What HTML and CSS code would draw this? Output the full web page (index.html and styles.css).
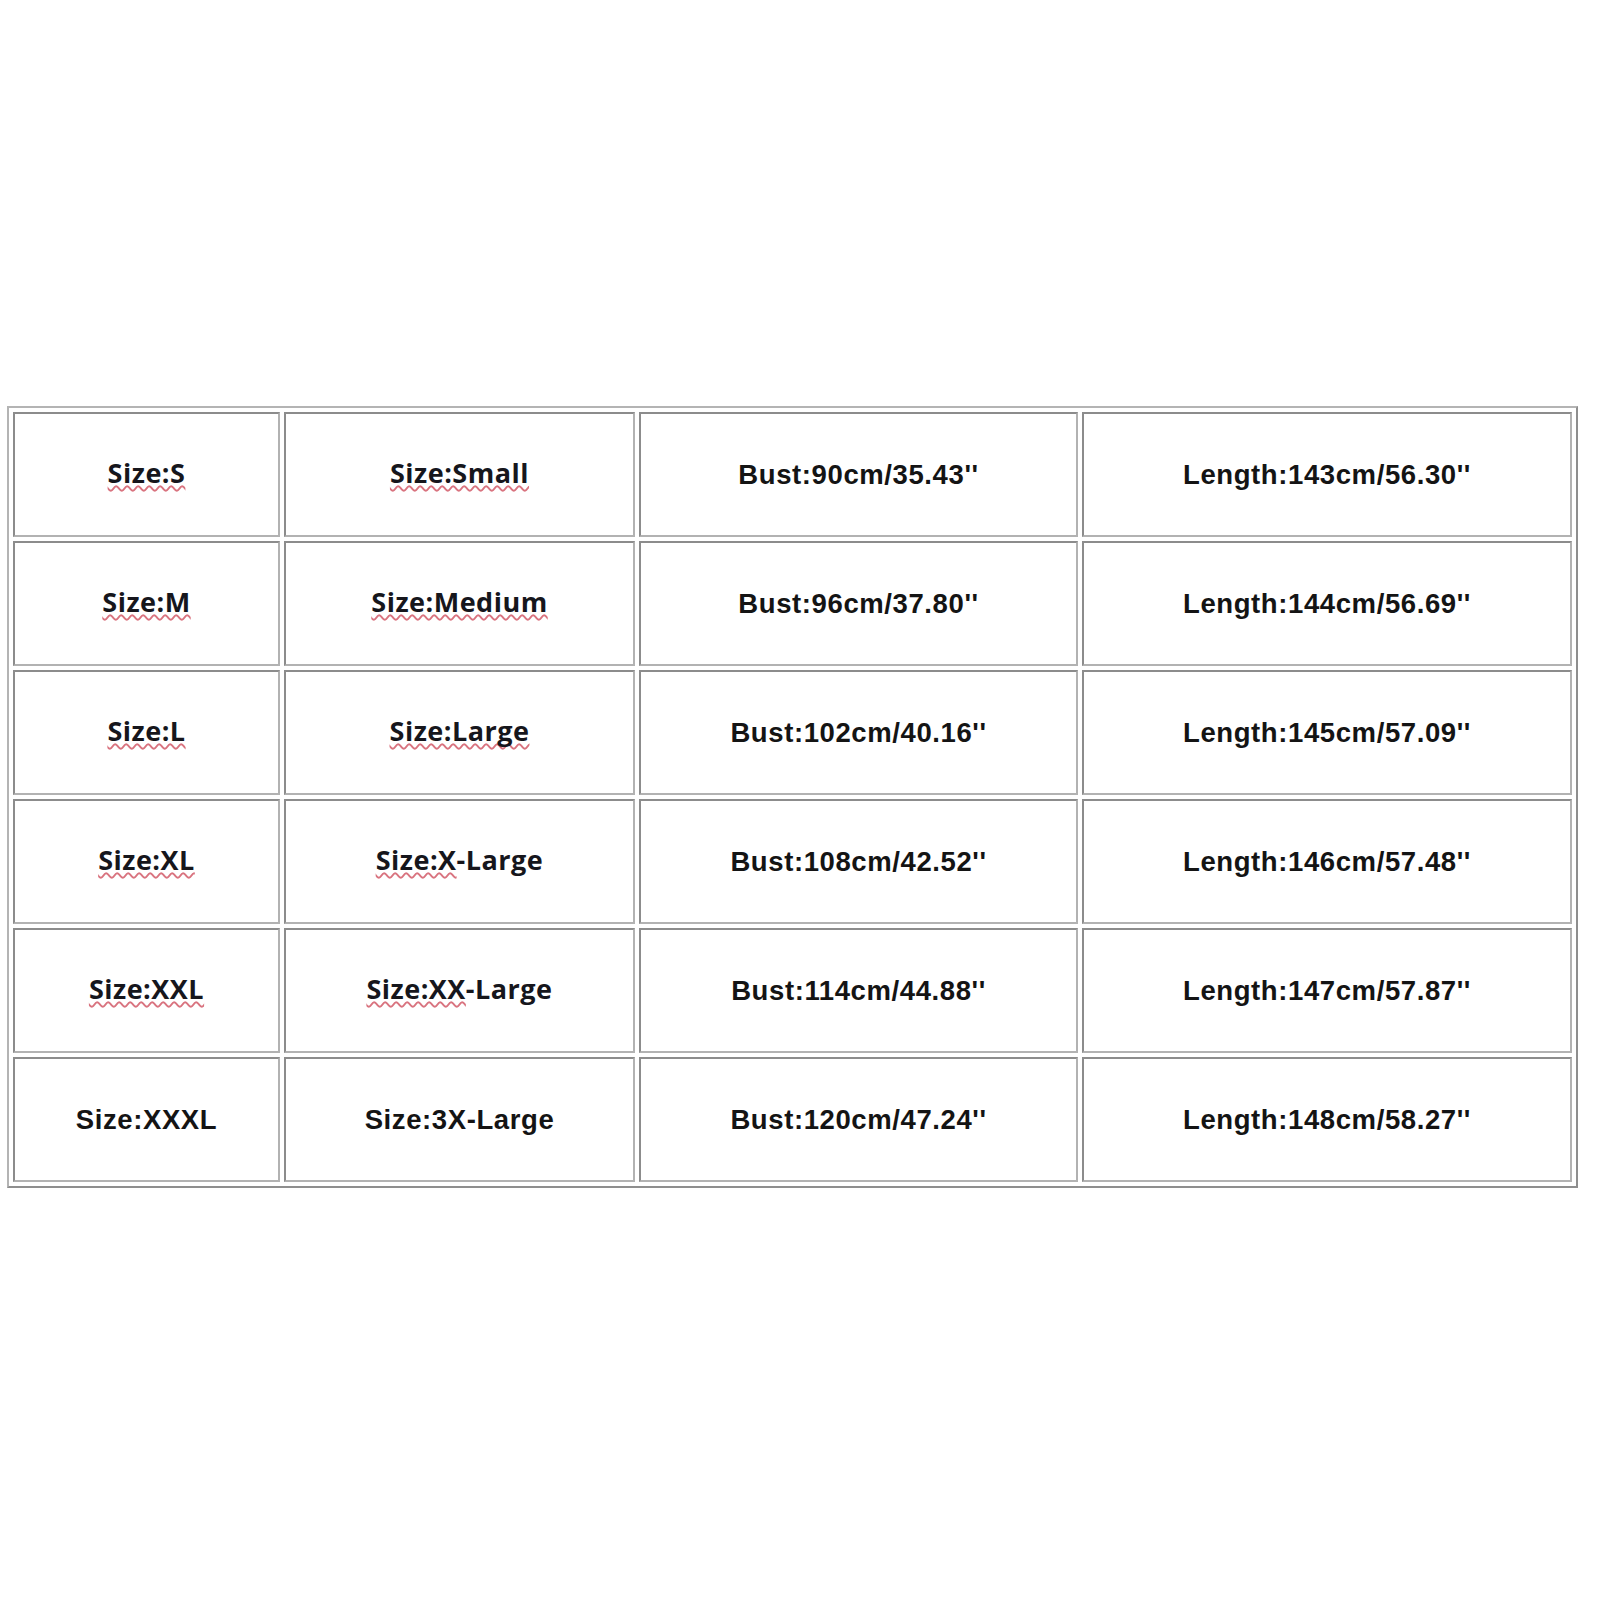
FILE: index.html
```html
<!DOCTYPE html>
<html lang="en">
<head>
<meta charset="utf-8">
<title>Size chart</title>
<link rel="stylesheet" href="styles.css">
</head>
<body>
<div class="chart" role="table">
  <div class="cell alt"><span class="spell">Size:S</span></div>
  <div class="cell alt"><span class="spell">Size:Small</span></div>
  <div class="cell">Bust:90cm/35.43''</div>
  <div class="cell">Length:143cm/56.30''</div>

  <div class="cell alt"><span class="spell">Size:M</span></div>
  <div class="cell alt"><span class="spell">Size:Medium</span></div>
  <div class="cell">Bust:96cm/37.80''</div>
  <div class="cell">Length:144cm/56.69''</div>

  <div class="cell alt"><span class="spell">Size:L</span></div>
  <div class="cell alt"><span class="spell">Size:Large</span></div>
  <div class="cell">Bust:102cm/40.16''</div>
  <div class="cell">Length:145cm/57.09''</div>

  <div class="cell alt"><span class="spell">Size:XL</span></div>
  <div class="cell alt"><span class="spell">Size:X</span>-Large</div>
  <div class="cell">Bust:108cm/42.52''</div>
  <div class="cell">Length:146cm/57.48''</div>

  <div class="cell alt"><span class="spell">Size:XXL</span></div>
  <div class="cell alt"><span class="spell">Size:XX</span>-Large</div>
  <div class="cell">Bust:114cm/44.88''</div>
  <div class="cell">Length:147cm/57.87''</div>

  <div class="cell">Size:XXXL</div>
  <div class="cell">Size:3X-Large</div>
  <div class="cell">Bust:120cm/47.24''</div>
  <div class="cell">Length:148cm/58.27''</div>
</div>
</body>
</html>
```
FILE: styles.css
```css
html, body {
  margin: 0;
  padding: 0;
  background: #ffffff;
}

body {
  padding: 406px 0 0 7px;
  font-family: "Liberation Sans", Arial, sans-serif;
}

.chart {
  width: 1571px;
  box-sizing: border-box;
  display: grid;
  grid-template-columns: 267px 351px 439px 490px;
  grid-auto-rows: 125px;
  gap: 4px;
  padding: 4px;
  border: 2px solid #a9a9a9;
  border-top-color: #b4b4b4;
  border-left-color: #b4b4b4;
  border-right-color: #8e8e8e;
  border-bottom-color: #8e8e8e;
}

.cell {
  box-sizing: border-box;
  border: 2px solid #9c9c9c;
  border-top-color: #8c8c8c;
  border-left-color: #8c8c8c;
  border-right-color: #b2b2b2;
  border-bottom-color: #b2b2b2;
  display: flex;
  align-items: center;
  justify-content: center;
  font-size: 27.5px;
  letter-spacing: 0.6px;
  font-weight: bold;
  color: #141414;
  white-space: nowrap;
}

.alt {
  font-family: "Open Sans", "Liberation Sans", sans-serif;
  font-size: 27px;
  letter-spacing: 0.5px;
  color: #16161c;
  padding-bottom: 4px;
}

.spell {
  text-decoration-line: underline;
  text-decoration-style: wavy;
  text-decoration-color: #d9737f;
  text-decoration-thickness: 1.5px;
  text-decoration-skip-ink: none;
  text-underline-offset: 2px;
}
```
